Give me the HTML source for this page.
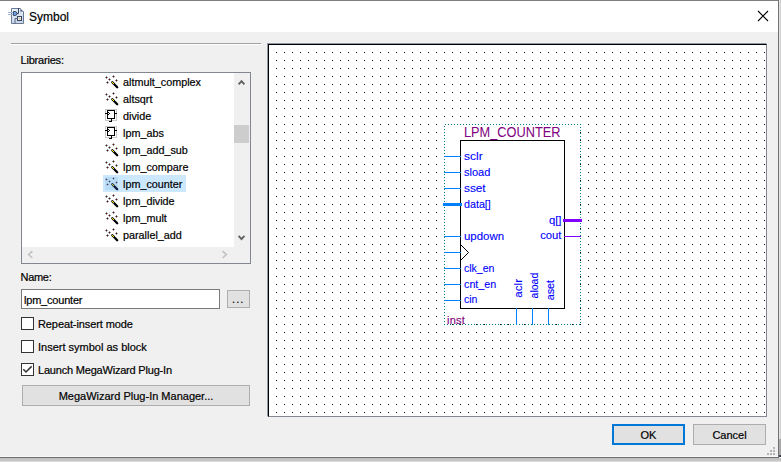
<!DOCTYPE html>
<html><head><meta charset="utf-8">
<style>
html,body{margin:0;padding:0;}
body{width:781px;height:462px;overflow:hidden;position:relative;background:#f0f0f0;font-family:"Liberation Sans",sans-serif;font-size:11px;color:#000;}
.a{position:absolute;}
.t{position:absolute;white-space:nowrap;line-height:1;-webkit-text-stroke:0.2px #000;}
.btn{position:absolute;box-sizing:border-box;background:#e1e1e1;border:1px solid #adadad;}
.cb{position:absolute;box-sizing:border-box;width:13px;height:13px;border:1px solid #333;background:#fff;}
.row{position:absolute;left:123px;white-space:nowrap;line-height:1;font-size:10.8px;-webkit-text-stroke:0.2px #000;}
</style></head><body>
<!-- window frame -->
<div class="a" style="left:0;top:0;width:779px;height:1px;background:#7f7f7f"></div>
<div class="a" style="left:0;top:1px;width:778px;height:31px;background:#fff"></div>
<div class="a" style="left:778px;top:0;width:1px;height:458px;background:#727272"></div>
<div class="a" style="left:779px;top:0;width:1px;height:439px;background:#e4e4e4"></div>
<div class="a" style="left:780px;top:0;width:1px;height:439px;background:#d2d2d2"></div>
<div class="a" style="left:779px;top:439px;width:2px;height:16px;background:#a9a9a9"></div>
<div class="a" style="left:779px;top:455px;width:2px;height:2px;background:#3c4454"></div>
<div class="a" style="left:0;top:456px;width:778px;height:1px;background:#f9f9f9"></div>
<div class="a" style="left:0;top:457px;width:779px;height:1px;background:#707070"></div>
<div class="a" style="left:0;top:458px;width:781px;height:2px;background:#c2c2c2"></div>
<div class="a" style="left:0;top:460px;width:781px;height:1px;background:#c9c9c9"></div>
<div class="a" style="left:0;top:461px;width:781px;height:1px;background:#d9d9d9"></div>

<!-- title icon -->
<svg class="a" style="left:7px;top:7px" width="19" height="19" viewBox="7 7 19 19">
  <defs><linearGradient id="pg" x1="0" y1="0" x2="0.3" y2="1"><stop offset="0" stop-color="#eef3fb"/><stop offset="1" stop-color="#c9d6ea"/></linearGradient></defs>
  <path d="M11.5 8.5 H20.5 L23.5 11.5 V23.5 H11.5 Z" fill="url(#pg)" stroke="#6a7a94"/>
  <path d="M20.5 8.5 V11.5 H23.5" fill="#fff" stroke="#8a9ab2"/>
  <rect x="21" y="10" width="1" height="1" fill="#4a5a74"/>
  <rect x="8" y="12" width="5" height="1" fill="#9fb3cf"/>
  <rect x="8" y="14" width="5" height="1" fill="#9fb3cf"/>
  <path d="M13.5 11.5 H15 Q17 11.5 17 13.5 Q17 15.5 15 15.5 H13.5 Z" fill="#6ea2e6" stroke="#34445e" stroke-width="0.9"/>
  <path d="M17 13.5 H18.5 V8" fill="none" stroke="#34445e" stroke-width="1"/>
  <rect x="17.5" y="16.5" width="4" height="4" fill="#fbf6e6" stroke="#34445e" stroke-width="1"/>
  <path d="M19.5 17 V20 M18 18.5 H21" stroke="#c9c0a8" stroke-width="0.6"/>
  <path d="M17.5 18.5 H15 V23.5" fill="none" stroke="#5a6a84" stroke-width="1"/>
</svg>
<div class="t" style="left:29px;top:11px;font-size:12px;">Symbol</div>
<!-- close X -->
<svg class="a" style="left:757px;top:10px" width="12" height="12" viewBox="0 0 12 12">
  <path d="M1 1 L11 11 M11 1 L1 11" stroke="#000" stroke-width="1.1"/>
</svg>

<!-- etched line -->
<div class="a" style="left:11px;top:43px;width:250px;height:1px;background:#a0a0a0"></div>
<div class="a" style="left:11px;top:44px;width:250px;height:1px;background:#fff"></div>

<div class="t" style="left:20.5px;top:55px;letter-spacing:-0.2px;">Libraries:</div>

<!-- list box -->
<div class="a" style="left:21px;top:72px;width:228px;height:190px;border:1px solid #828790;background:#fff;"></div>
<!-- vertical scrollbar -->
<div class="a" style="left:234px;top:73px;width:16px;height:174px;background:#f0f0f0"></div>
<div class="a" style="left:234px;top:125px;width:15px;height:18px;background:#cdcdcd"></div>
<svg class="a" style="left:234px;top:73px" width="16" height="16" viewBox="0 0 16 16">
  <path d="M4.6 11.3 L7.5 8.1 L10.4 11.3" fill="none" stroke="#606060" stroke-width="1.9"/>
</svg>
<svg class="a" style="left:234px;top:229px" width="16" height="16" viewBox="0 0 16 16">
  <path d="M4.6 6.9 L7.5 10.1 L10.4 6.9" fill="none" stroke="#606060" stroke-width="1.9"/>
</svg>
<!-- horizontal scrollbar -->
<div class="a" style="left:22px;top:247px;width:228px;height:16px;background:#f0f0f0"></div>
<svg class="a" style="left:22px;top:247px" width="16" height="16" viewBox="0 0 16 16">
  <path d="M10.4 4.2 L6.6 7.6 L10.4 11" fill="none" stroke="#c2c2c2" stroke-width="1.6"/>
</svg>
<svg class="a" style="left:216px;top:247px" width="16" height="16" viewBox="0 0 16 16">
  <path d="M6.6 4.2 L10.4 7.6 L6.6 11" fill="none" stroke="#c2c2c2" stroke-width="1.6"/>
</svg>

<svg class="a" style="left:22px;top:73px" width="212" height="174" viewBox="22 73 212 174">
<defs>
<g id="wand" shape-rendering="crispEdges">
 <g fill="#8e9a9a"><rect x="3" y="3" width="1" height="3"/><rect x="2" y="4" width="3" height="1"/>
 <rect x="10" y="2" width="1" height="3"/><rect x="9" y="3" width="3" height="1"/>
 <rect x="6" y="5" width="1" height="3"/><rect x="5" y="6" width="3" height="1"/>
 <rect x="13" y="6" width="1" height="3"/><rect x="12" y="7" width="3" height="1"/>
 <rect x="4" y="8" width="1" height="3"/><rect x="3" y="9" width="3" height="1"/></g>
 <g fill="#800000"><rect x="3" y="4" width="1" height="1"/><rect x="10" y="3" width="1" height="1"/><rect x="6" y="6" width="1" height="1"/><rect x="13" y="7" width="1" height="1"/><rect x="4" y="9" width="1" height="1"/></g>
 <path d="M9.3 9.3 L14.2 14.2" stroke="#000" stroke-width="2.3" stroke-linecap="round" shape-rendering="auto"/>
 <rect x="9" y="9" width="1" height="1" fill="#ffff00"/><rect x="10" y="10" width="1" height="1" fill="#ffff00"/>
</g>
<g id="wsel" shape-rendering="crispEdges">
 <g fill="#8fb2cc"><rect x="3" y="3" width="1" height="3"/><rect x="2" y="4" width="3" height="1"/>
 <rect x="10" y="2" width="1" height="3"/><rect x="9" y="3" width="3" height="1"/>
 <rect x="6" y="5" width="1" height="3"/><rect x="5" y="6" width="3" height="1"/>
 <rect x="13" y="6" width="1" height="3"/><rect x="12" y="7" width="3" height="1"/>
 <rect x="4" y="8" width="1" height="3"/><rect x="3" y="9" width="3" height="1"/></g>
 <g fill="#6a2850"><rect x="3" y="4" width="1" height="1"/><rect x="10" y="3" width="1" height="1"/><rect x="6" y="6" width="1" height="1"/><rect x="13" y="7" width="1" height="1"/><rect x="4" y="9" width="1" height="1"/></g>
 <path d="M9.3 9.3 L14.2 14.2" stroke="#0c1a3c" stroke-width="2.3" stroke-linecap="round" shape-rendering="auto"/>
 <rect x="9" y="9" width="1" height="1" fill="#c8dc40"/><rect x="10" y="10" width="1" height="1" fill="#c8dc40"/>
</g>
<g id="blk" shape-rendering="crispEdges">
 <rect x="2.5" y="2.5" width="11" height="11" fill="none" stroke="#c8c8c8"/>
 <rect x="4.5" y="3.5" width="7" height="8" fill="#fff" stroke="#000"/>
 <rect x="2" y="6" width="2" height="1" fill="#000"/><rect x="12" y="6" width="2" height="1" fill="#000"/>
 <rect x="5" y="5" width="1" height="1" fill="#000"/><rect x="6" y="6" width="1" height="1" fill="#000"/><rect x="5" y="7" width="1" height="1" fill="#000"/>
 <rect x="8" y="12" width="1" height="2" fill="#000"/><rect x="6" y="14" width="3" height="1" fill="#000"/>
</g>
</defs>
<rect x="103" y="175" width="83" height="17" fill="#cce8ff"/>
<rect x="105" y="177" width="13" height="13" fill="#b9dcf6"/>

<use href="#wand" x="103" y="73"/>
<use href="#wand" x="103" y="90"/>
<use href="#blk" x="103" y="107"/>
<use href="#blk" x="103" y="124"/>
<use href="#wand" x="103" y="141"/>
<use href="#wand" x="103" y="158"/>
<use href="#wsel" x="103" y="175"/>
<use href="#wand" x="103" y="192"/>
<use href="#wand" x="103" y="209"/>
<use href="#wand" x="103" y="226"/>
</svg>
<div class="row" style="top:77px">altmult_complex</div>
<div class="row" style="top:94px">altsqrt</div>
<div class="row" style="top:111px">divide</div>
<div class="row" style="top:128px">lpm_abs</div>
<div class="row" style="top:145px">lpm_add_sub</div>
<div class="row" style="top:162px">lpm_compare</div>
<div class="row" style="top:179px">lpm_counter</div>
<div class="row" style="top:196px">lpm_divide</div>
<div class="row" style="top:213px">lpm_mult</div>
<div class="row" style="top:230px">parallel_add</div>

<div class="t" style="left:20.5px;top:272px;letter-spacing:-0.3px;">Name:</div>
<div class="a" style="left:21px;top:289px;width:197px;height:18px;border:1px solid #7a7a7a;background:#fff"></div>
<div class="t" style="left:24px;top:295px;letter-spacing:-0.2px;">lpm_counter</div>
<div class="btn" style="left:227px;top:290px;width:23px;height:18px;"></div>
<div class="t" style="left:232px;top:294px;letter-spacing:1.1px;">...</div>

<div class="cb" style="left:21px;top:317px"></div>
<div class="t" style="left:38px;top:319px;letter-spacing:-0.1px;">Repeat-insert mode</div>
<div class="cb" style="left:21px;top:340px"></div>
<div class="t" style="left:38px;top:342px;">Insert symbol as block</div>
<div class="cb" style="left:21px;top:363px"></div>
<svg class="a" style="left:21px;top:363px" width="13" height="13" viewBox="0 0 13 13">
  <path d="M2.3 6.2 L5 9 L10.6 3.4" fill="none" stroke="#333" stroke-width="1.5"/>
</svg>
<div class="t" style="left:38px;top:365px;letter-spacing:-0.2px;">Launch MegaWizard Plug-In</div>

<div class="btn" style="left:22px;top:385px;width:228px;height:21px;"></div>
<div class="t" style="left:22px;top:391px;width:228px;text-align:center;">MegaWizard Plug-In Manager...</div>

<!-- canvas frame -->
<div class="a" style="left:267px;top:43px;width:500px;height:374px;box-sizing:border-box;border-left:1px solid #8f98a6;border-top:1px solid #8f98a6;border-right:1px solid #fff;border-bottom:1px solid #fff;"></div>
<div class="a" style="left:268px;top:44px;width:499px;height:373px;box-sizing:border-box;border-left:1px solid #000;border-top:1px solid #000;border-right:1px solid #838893;border-bottom:1px solid #838893;background:#fff"></div>

<svg class="a" style="left:269px;top:45px" width="497" height="371" viewBox="269 45 497 371" shape-rendering="crispEdges">
  <defs>
    <pattern id="g" x="0" y="0" width="8" height="8" patternUnits="userSpaceOnUse"><rect x="4" y="4" width="1" height="1" fill="#000"/></pattern>
    <pattern id="dx1" x="0" y="0" width="3" height="1" patternUnits="userSpaceOnUse"><rect x="1" y="0" width="1" height="1" fill="#008080"/></pattern>
    <pattern id="dx0" x="0" y="0" width="3" height="1" patternUnits="userSpaceOnUse"><rect x="0" y="0" width="1" height="1" fill="#008080"/></pattern>
    <pattern id="dy1" x="0" y="0" width="1" height="3" patternUnits="userSpaceOnUse"><rect x="0" y="1" width="1" height="1" fill="#008080"/></pattern>
    <pattern id="dy0" x="0" y="0" width="1" height="3" patternUnits="userSpaceOnUse"><rect x="0" y="0" width="1" height="1" fill="#008080"/></pattern>
  </defs>
  <rect x="269" y="45" width="497" height="371" fill="url(#g)"/>
  <rect x="444" y="124" width="136" height="200" fill="#fff"/>
  <rect x="444" y="124" width="137" height="1" fill="url(#dx1)"/>
  <rect x="444" y="324" width="137" height="1" fill="url(#dx0)"/>
  <rect x="580" y="124" width="1" height="201" fill="url(#dy1)"/>
  <rect x="444" y="124" width="1" height="201" fill="url(#dy0)"/>
  <!-- box -->
  <rect x="460.5" y="140.5" width="104" height="168" fill="none" stroke="#000" stroke-width="1"/>
  <g fill="#0080ff">
    <rect x="444" y="156" width="17" height="1"/>
    <rect x="444" y="172" width="17" height="1"/>
    <rect x="444" y="188" width="17" height="1"/>
    <rect x="443" y="203" width="19" height="3"/>
    <rect x="444" y="236" width="17" height="1"/>
    <rect x="444" y="252" width="17" height="1"/>
    <rect x="444" y="268" width="17" height="1"/>
    <rect x="444" y="284" width="17" height="1"/>
    <rect x="444" y="300" width="17" height="1"/>
    <rect x="516" y="308" width="1" height="17"/>
    <rect x="532" y="308" width="1" height="17"/>
    <rect x="548" y="308" width="1" height="17"/>
  </g>
  <g fill="#8000ff">
    <rect x="563" y="219" width="19" height="3"/>
    <rect x="564" y="236" width="17" height="1"/>
  </g>
  <path d="M460.5 244.5 L468.5 252.5 L460.5 260.5" fill="none" stroke="#000" stroke-width="1" shape-rendering="auto"/>
  <g font-family="Liberation Sans" font-size="11" fill="#0000ff" stroke="#0000ff" stroke-width="0.1" shape-rendering="auto">
    <text x="464" y="160" textLength="18.7" lengthAdjust="spacingAndGlyphs">sclr</text>
    <text x="464" y="176" textLength="26.4" lengthAdjust="spacingAndGlyphs">sload</text>
    <text x="464" y="192" textLength="21.6" lengthAdjust="spacingAndGlyphs">sset</text>
    <text x="464" y="208" textLength="26.8" lengthAdjust="spacingAndGlyphs">data[]</text>
    <text x="464" y="240" textLength="40.1" lengthAdjust="spacingAndGlyphs">updown</text>
    <text x="464" y="272" textLength="30.4" lengthAdjust="spacingAndGlyphs">clk_en</text>
    <text x="464" y="288" textLength="32.3" lengthAdjust="spacingAndGlyphs">cnt_en</text>
    <text x="464" y="303" textLength="13.4" lengthAdjust="spacingAndGlyphs">cin</text>
    <text x="561.5" y="224" text-anchor="end" textLength="12.5" lengthAdjust="spacingAndGlyphs">q[]</text>
    <text x="561.5" y="239" text-anchor="end" textLength="21.3" lengthAdjust="spacingAndGlyphs">cout</text>
    <text transform="translate(522.3 297.7) rotate(-90)" letter-spacing="0" textLength="18.8" lengthAdjust="spacingAndGlyphs">aclr</text>
    <text transform="translate(538.3 298.4) rotate(-90)" letter-spacing="0" textLength="25.6" lengthAdjust="spacingAndGlyphs">aload</text>
    <text transform="translate(554.3 300.3) rotate(-90)" letter-spacing="0" textLength="20.4" lengthAdjust="spacingAndGlyphs">aset</text>
  </g>
  <text x="464" y="137" font-family="Liberation Sans" font-size="13.8" fill="#800080" textLength="96.5" lengthAdjust="spacingAndGlyphs" shape-rendering="auto">LPM_COUNTER</text>
  <text x="447" y="323.5" font-family="Liberation Sans" font-size="11" fill="#800080" stroke="#800080" stroke-width="0.15" letter-spacing="0.25" shape-rendering="auto">inst</text>
</svg>

<div class="btn" style="left:612px;top:424px;width:73px;height:21px;border:2px solid #0078d7;"></div>
<div class="t" style="left:612px;top:430px;width:73px;text-align:center;">OK</div>
<div class="btn" style="left:693px;top:424px;width:73px;height:21px;"></div>
<div class="t" style="left:693px;top:430px;width:73px;text-align:center;">Cancel</div>

<!-- size grip -->
<svg class="a" style="left:765px;top:445px" width="11" height="10" viewBox="0 0 11 10" shape-rendering="crispEdges">
  <g fill="#b4b4b4">
    <rect x="8" y="2" width="2" height="2"/>
    <rect x="5" y="5" width="2" height="2"/><rect x="8" y="5" width="2" height="2"/>
    <rect x="2" y="8" width="2" height="2"/><rect x="5" y="8" width="2" height="2"/><rect x="8" y="8" width="2" height="2"/>
  </g>
</svg>
</body></html>
